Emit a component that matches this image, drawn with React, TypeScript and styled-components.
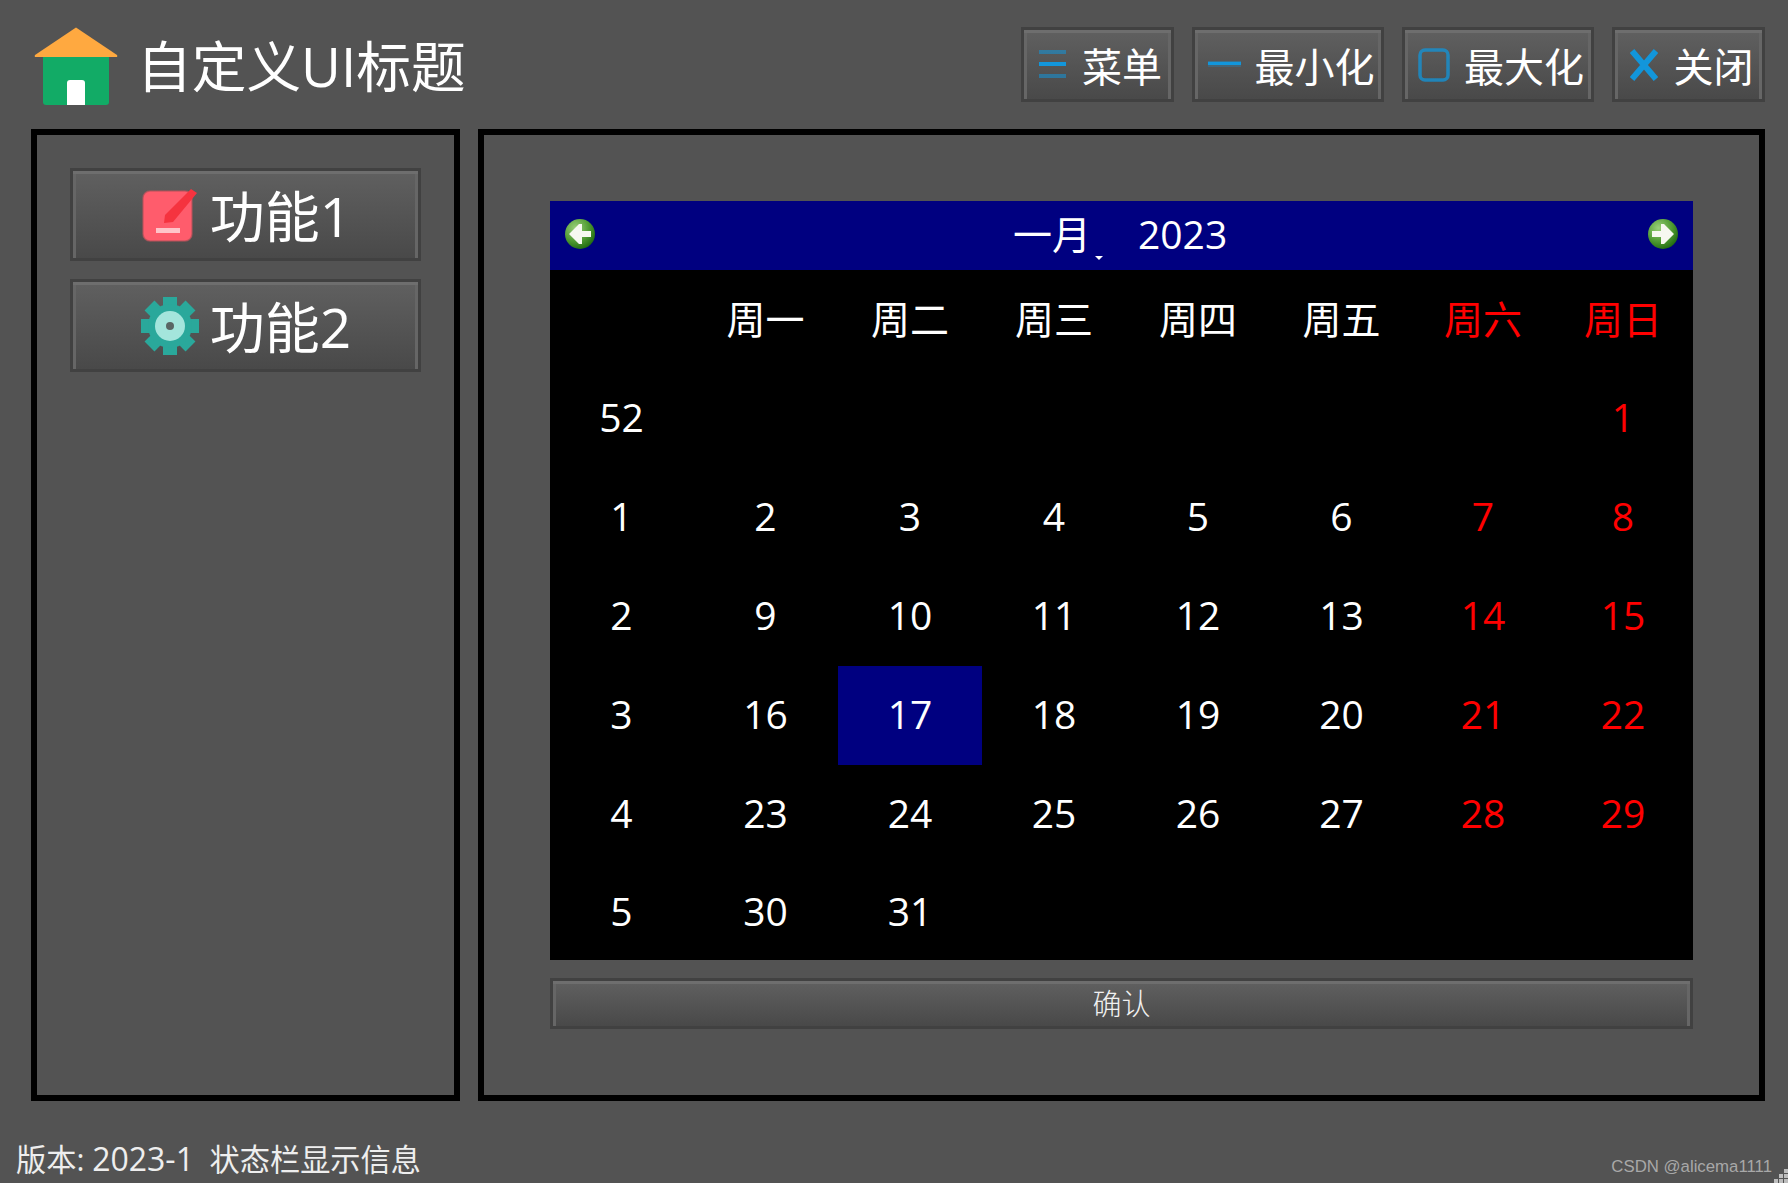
import React from 'react'
import styled, { createGlobalStyle } from 'styled-components'

const BACKGROUND = '#535353'

const GlobalStyle = createGlobalStyle`
  html, body {
    margin: 0;
    padding: 0;
    background: ${BACKGROUND};
  }
  * {
    box-sizing: border-box;
  }
`

const FONT = `'Open Sans', 'Noto Sans CJK SC', sans-serif`
const ICON_BLUE = '#1296db'

const Page = styled.div`
  position: relative;
  width: 1788px;
  height: 1183px;
  overflow: hidden;
  display: flex;
  flex-direction: column;
  background: ${BACKGROUND};
  color: #ffffff;
  font-family: ${FONT};
`

const Header = styled.header`
  height: 129px;
  display: flex;
  align-items: flex-start;
  justify-content: space-between;
  padding: 27px 23px 0 34px;
`

const Brand = styled.div`
  display: flex;
  align-items: center;
  gap: 19px;
  height: 78px;
`

const Title = styled.h1`
  margin: 0;
  font-size: 54.7px;
  font-weight: 400;
  line-height: 78px;
  white-space: nowrap;
`

const WindowControls = styled.div`
  display: flex;
  gap: 18px;
`

const BevelButton = styled.button`
  display: flex;
  align-items: center;
  justify-content: center;
  padding: 0;
  border: 3px solid #414141;
  background: linear-gradient(180deg, #606060 0%, #494949 100%);
  box-shadow: inset 0 3px 0 #6e6e6e, inset 3px 0 0 #666666, inset -3px 0 0 #666666;
  color: #ffffff;
  font-family: ${FONT};
  white-space: nowrap;
`

const WindowButton = styled(BevelButton)<{ $width: number; $gap: number }>`
  width: ${({ $width }) => $width}px;
  height: 75px;
  gap: ${({ $gap }) => $gap}px;
  padding-left: 6px;
  font-size: 40px;
  line-height: 1;
`

const WindowLabel = styled.span`
  margin-top: 4px;
`

const Body = styled.main`
  height: 972px;
  display: flex;
  gap: 18px;
  padding: 0 23px 0 31px;
`

const Panel = styled.section`
  border: 6px solid #000000;
`

const SidePanel = styled(Panel)`
  width: 429px;
  display: flex;
  flex-direction: column;
  gap: 18px;
  padding: 33px;
`

const SideButton = styled(BevelButton)`
  width: 351px;
  height: 93px;
  gap: 10px;
  padding-top: 1px;
  font-size: 55px;
  line-height: 1;
`

const ContentPanel = styled(Panel)`
  flex: 1;
  display: flex;
  flex-direction: column;
  gap: 18px;
  padding: 66px;
`

const Calendar = styled.div`
  height: 759px;
  display: flex;
  flex-direction: column;
  background: #000000;
`

const CalendarNav = styled.div`
  position: relative;
  height: 69px;
  display: flex;
  align-items: center;
  justify-content: space-between;
  padding: 0 14px 3px;
  background: #000080;
`

const NavTitle = styled.div`
  position: absolute;
  left: 463px;
  top: 0;
  height: 69px;
  padding-bottom: 4px;
  display: flex;
  align-items: center;
  font-size: 39px;
  line-height: 1;
`

const MonthCaret = styled.span`
  align-self: flex-end;
  width: 0;
  height: 0;
  margin: 0 35px 6px 4px;
  border-left: 4px solid transparent;
  border-right: 4px solid transparent;
  border-top: 4px solid #ffffff;
`

const DayGrid = styled.div`
  flex: 1;
  display: grid;
  grid-template-columns: 143px 145px 144px 144px 144px 143px 140px 140px;
  grid-template-rows: repeat(6, 99px) 96px;
`

const Cell = styled.div<{ $weekend?: boolean; $selected?: boolean; $heading?: boolean }>`
  display: flex;
  align-items: center;
  justify-content: center;
  padding-bottom: ${({ $heading }) => ($heading ? '2px' : '4px')};
  font-size: 39px;
  line-height: 1;
  color: ${({ $weekend }) => ($weekend ? '#ff0000' : '#ffffff')};
  background: ${({ $selected }) => ($selected ? '#000080' : 'transparent')};
`

const ConfirmButton = styled(BevelButton)`
  width: 100%;
  height: 51px;
  font-size: 29px;
  line-height: 1;
  font-weight: 300;
  color: #f0f0f0;
`

const StatusBar = styled.footer`
  flex: 1;
  display: flex;
  align-items: flex-end;
  padding: 0 0 0 16px;
  font-size: 30.2px;
  line-height: 46px;
  color: #eeeeee;
  white-space: pre;
`

const StatusVersion = styled.span`
  font-size: 32px;
`

const Watermark = styled.span`
  position: absolute;
  right: 16px;
  bottom: 6px;
  font-family: 'Liberation Sans', sans-serif;
  font-size: 16.8px;
  line-height: 20px;
  color: #a8a8a8;
`

const ResizeGrip = styled.svg`
  position: absolute;
  right: 0;
  bottom: 0;
`

const HomeIcon = () => (
  <svg width="84" height="78" viewBox="0 0 84 78">
    <path d="M42 0.5 L83 28 Q84 30 82 30 L2 30 Q0 30 1 28 Z" fill="#ffa940" />
    <path d="M9 30 H75 V75 Q75 78 72 78 H12 Q9 78 9 75 Z" fill="#12ab66" />
    <path d="M33 78 V56 Q33 53 36 53 H48 Q51 53 51 56 V78 Z" fill="#ffffff" />
  </svg>
)

const MenuIcon = () => (
  <svg width="27" height="33" viewBox="0 0 27 33">
    <rect x="0" y="2" width="27" height="4" fill={ICON_BLUE} opacity="0.55" />
    <rect x="0" y="14" width="27" height="4" fill={ICON_BLUE} />
    <rect x="0" y="26" width="27" height="4" fill={ICON_BLUE} opacity="0.55" />
  </svg>
)

const MinimizeIcon = () => (
  <svg width="33" height="33" viewBox="0 0 33 33">
    <rect x="0" y="13" width="33" height="1" fill={ICON_BLUE} opacity="0.4" />
    <rect x="0" y="14" width="33" height="3" fill={ICON_BLUE} />
    <rect x="0" y="17" width="33" height="2" fill={ICON_BLUE} opacity="0.25" />
  </svg>
)

const MaximizeIcon = () => (
  <svg width="32" height="34" viewBox="0 0 32 34">
    <rect x="2" y="2" width="28" height="30" rx="5" fill="none" stroke={ICON_BLUE} strokeOpacity="0.75" strokeWidth="3.5" />
  </svg>
)

const CloseIcon = () => (
  <svg width="28" height="32" viewBox="0 0 28 32">
    <path d="M2 2 L26 30 M26 2 L2 30" fill="none" stroke={ICON_BLUE} strokeWidth="6" />
  </svg>
)

const EditIcon = () => (
  <svg width="60" height="60" viewBox="0 0 60 60">
    <rect x="3" y="6" width="49" height="50" rx="7" fill="#ff5c6c" stroke="#b5525a" strokeOpacity="0.7" strokeWidth="1.5" />
    <path d="M24 38 L25 30 L51 4 L57 8 L33 37 Z" fill="#f5333f" />
    <rect x="16" y="43" width="24" height="5" fill="#ffc4c9" />
  </svg>
)

const GearIcon = () => {
  const teeth = Array.from({ length: 8 }, (_, i) => i * 45)
  return (
    <svg width="60" height="60" viewBox="0 0 60 60">
      {teeth.map((deg) => (
        <rect key={deg} x="23" y="1" width="14" height="14" fill="#2aa89b" transform={`rotate(${deg} 30 30)`} />
      ))}
      <circle cx="30" cy="30" r="22" fill="#2aa89b" />
      <circle cx="30" cy="30" r="15" fill="#a4e5dc" />
      <circle cx="30" cy="30" r="4" fill="#5a6664" />
    </svg>
  )
}

const NavArrow = ({ direction }: { direction: 'left' | 'right' }) => (
  <svg width="32" height="36" viewBox="0 0 32 36">
    <defs>
      <radialGradient id={`nav-${direction}`} cx="35%" cy="30%" r="75%">
        <stop offset="0%" stopColor="#9ad07a" />
        <stop offset="60%" stopColor="#4f9a32" />
        <stop offset="100%" stopColor="#1f6a10" />
      </radialGradient>
    </defs>
    <circle cx="16" cy="18" r="15" fill={`url(#nav-${direction})`} />
    <path
      d="M5 18 L15 8 L18 8 L18 15 L27 15 L27 21 L18 21 L18 28 L15 28 Z"
      fill="#f6f8f0"
      transform={direction === 'right' ? 'rotate(180 16 18)' : undefined}
    />
  </svg>
)

const HEADERS = ['周一', '周二', '周三', '周四', '周五', '周六', '周日']

const WEEKS: { week: number; days: (number | null)[] }[] = [
  { week: 52, days: [null, null, null, null, null, null, 1] },
  { week: 1, days: [2, 3, 4, 5, 6, 7, 8] },
  { week: 2, days: [9, 10, 11, 12, 13, 14, 15] },
  { week: 3, days: [16, 17, 18, 19, 20, 21, 22] },
  { week: 4, days: [23, 24, 25, 26, 27, 28, 29] },
  { week: 5, days: [30, 31, null, null, null, null, null] },
]

const App = () => (
  <Page>
    <GlobalStyle />
    <Header>
      <Brand>
        <HomeIcon />
        <Title>自定义UI标题</Title>
      </Brand>
      <WindowControls>
        <WindowButton $width={153} $gap={16}>
          <MenuIcon />
          <WindowLabel>菜单</WindowLabel>
        </WindowButton>
        <WindowButton $width={192} $gap={14}>
          <MinimizeIcon />
          <WindowLabel>最小化</WindowLabel>
        </WindowButton>
        <WindowButton $width={192} $gap={14}>
          <MaximizeIcon />
          <WindowLabel>最大化</WindowLabel>
        </WindowButton>
        <WindowButton $width={153} $gap={16}>
          <CloseIcon />
          <WindowLabel>关闭</WindowLabel>
        </WindowButton>
      </WindowControls>
    </Header>
    <Body>
      <SidePanel>
        <SideButton>
          <EditIcon />
          功能1
        </SideButton>
        <SideButton>
          <GearIcon />
          功能2
        </SideButton>
      </SidePanel>
      <ContentPanel>
        <Calendar>
          <CalendarNav>
            <NavArrow direction="left" />
            <NavTitle>
              一月
              <MonthCaret />
              2023
            </NavTitle>
            <NavArrow direction="right" />
          </CalendarNav>
          <DayGrid>
            <Cell $heading />
            {HEADERS.map((label, i) => (
              <Cell key={label} $heading $weekend={i > 4}>
                {label}
              </Cell>
            ))}
            {WEEKS.map(({ week, days }) => (
              <React.Fragment key={week}>
                <Cell>{week}</Cell>
                {days.map((day, i) => (
                  <Cell key={i} $weekend={i > 4} $selected={day === 17}>
                    {day}
                  </Cell>
                ))}
              </React.Fragment>
            ))}
          </DayGrid>
        </Calendar>
        <ConfirmButton>确认</ConfirmButton>
      </ContentPanel>
    </Body>
    <StatusBar>
      <span>
        版本: <StatusVersion>2023-1</StatusVersion>  状态栏显示信息
      </span>
    </StatusBar>
    <Watermark>CSDN @alicema1111</Watermark>
    <ResizeGrip width="16" height="16" viewBox="0 0 16 16">
      <g fill="#bdbdbd">
        <rect x="12" y="2" width="4" height="4" />
        <rect x="7" y="7" width="4" height="4" />
        <rect x="12" y="7" width="4" height="4" />
        <rect x="2" y="12" width="4" height="4" />
        <rect x="7" y="12" width="4" height="4" />
        <rect x="12" y="12" width="4" height="4" />
      </g>
    </ResizeGrip>
  </Page>
)

export default App
